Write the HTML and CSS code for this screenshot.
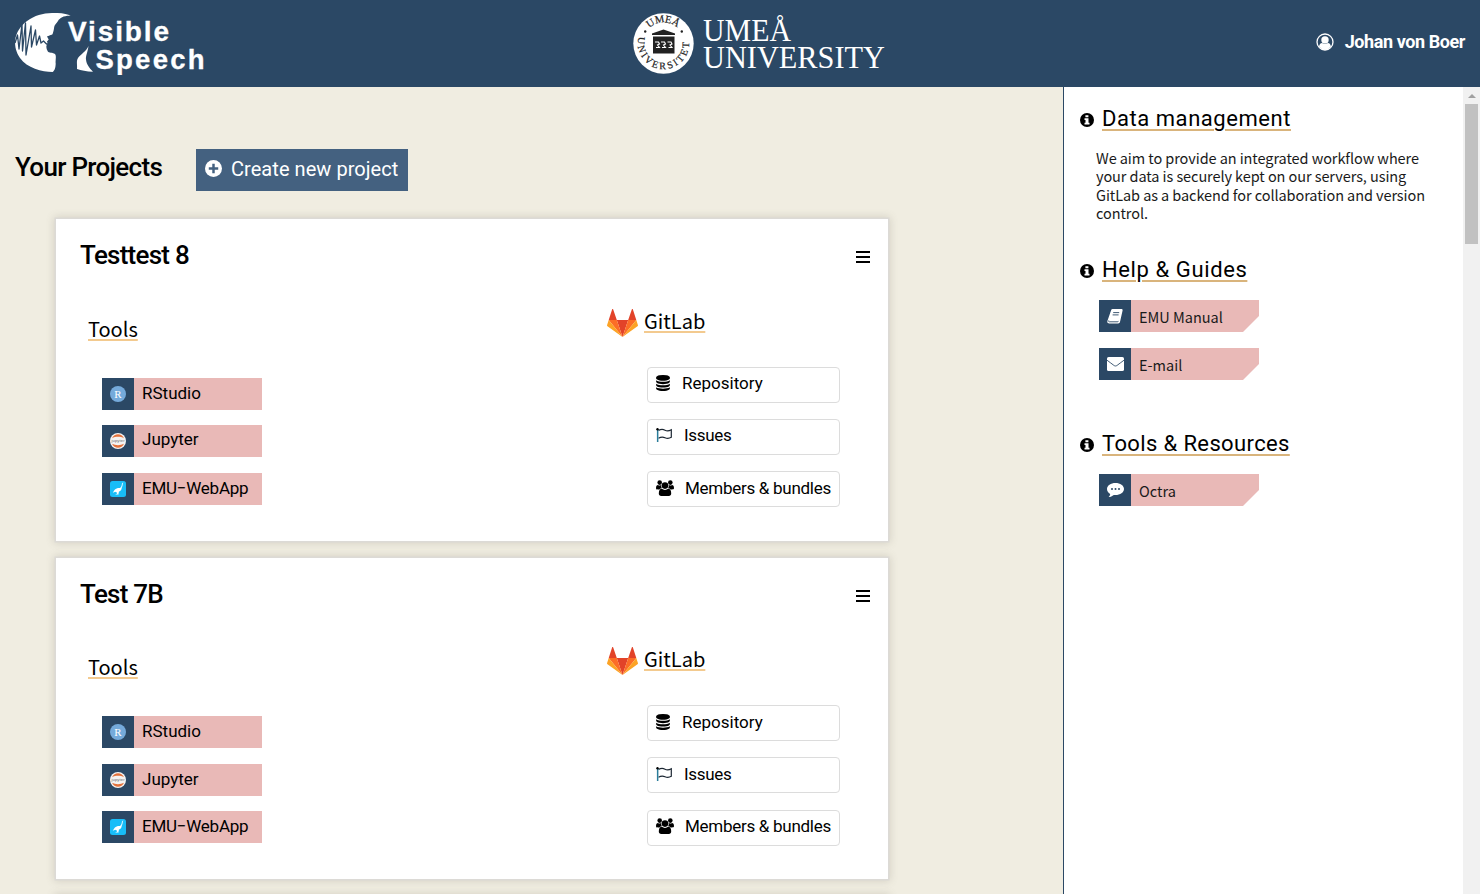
FILE: index.html
```html
<!DOCTYPE html>
<html lang="en">
<head>
<meta charset="utf-8">
<title>Visible Speech</title>
<link rel="stylesheet" href="styles.css">
</head>
<body>
<svg class="defs" width="0" height="0">
  <symbol id="i-info" viewBox="0 0 14 14"><circle cx="7" cy="7" r="7"/><path fill="#fff" d="M5.400 2.200h3v2.100h-3zM4.500 5.300h4v4.400h1v1.800h-5V9.700h1V7.100h-1z"/></symbol>
  <symbol id="i-menu" viewBox="0 0 14 12"><path d="M0 0h14v2H0zM0 5h14v2H0zM0 10h14v2H0z"/></symbol>
  <symbol id="i-db" viewBox="0 0 1536 1792"><path d="M768 768q237 0 443-43t325-127v170q0 69-103 128t-280 93.5-385 34.5-385-34.5-280-93.5-103-128v-170q119 84 325 127t443 43zm0 768q237 0 443-43t325-127v170q0 69-103 128t-280 93.5-385 34.5-385-34.5-280-93.5-103-128v-170q119 84 325 127t443 43zm0-384q237 0 443-43t325-127v170q0 69-103 128t-280 93.5-385 34.5-385-34.5-280-93.5-103-128v-170q119 84 325 127t443 43zm0-1152q208 0 385 34.5t280 93.5 103 128v128q0 69-103 128t-280 93.5-385 34.5-385-34.5-280-93.5-103-128v-128q0-69 103-128t280-93.5 385-34.5z"/></symbol>
  <symbol id="i-flag" viewBox="0 0 16 14"><path fill="none" stroke="#1c2733" stroke-width="1.200" d="M2.500 2.600C5 1 7 1.200 9 2.200s4 .8 6.300-.5v7.600c-2.200 1.300-4.300 1.300-6.300.4s-4-.9-6.500.5"/><path fill="#2a7d9b" d="M.9 1h1.500v13H.9z"/><circle cx="1.500" cy="1.300" r="1.200"/></symbol>
  <symbol id="i-users" viewBox="0 0 18 16"><circle cx="3.700" cy="2.600" r="2.300"/><circle cx="14.300" cy="2.600" r="2.300"/><path d="M0 8.200C0 6 .8 4.900 2 4.900c.8.700 2.300.8 3.200.2-.2 1.400.1 2.300.8 3.100-1 0-1.900.5-2.500 1.200H2C.7 9.400 0 9 0 8.200zM18 8.200c0-2.200-.8-3.300-2-3.300-.8.700-2.300.8-3.200.2.200 1.400-.1 2.300-.8 3.100 1 0 1.900.5 2.500 1.200H16c1.300 0 2-.4 2-1.200z"/><circle cx="9" cy="5.600" r="3.300"/><path d="M2.800 13.600c0-3.200 1-4.800 3-4.800 1.900 1.500 4.500 1.500 6.400 0 2 0 3 1.600 3 4.800 0 1.600-.9 2.400-2.400 2.400H5.200c-1.500 0-2.400-.8-2.400-2.400z"/></symbol>
  <symbol id="i-gitlab" viewBox="0 0 31 28"><path fill="#e24329" d="M15.500 28 21.200 11H9.800z"/><path fill="#fc6d26" d="M15.500 28 9.800 11H1.700zM15.500 28l5.700-17h8.100z"/><path fill="#fca326" d="M1.700 11 .1 16c-.2.500 0 1 .4 1.300l15 10.700zM29.300 11l1.600 5c.2.500 0 1-.4 1.300l-15 10.700z"/><path fill="#e24329" d="M1.700 11h8.100L6.200.4c-.2-.5-.9-.5-1.100 0zM29.300 11h-8.100L24.800.4c.2-.5.9-.5 1.100 0z"/></symbol>
  <symbol id="i-emu" viewBox="0 0 16 16"><rect width="16" height="16" rx="2.500" fill="#18bdf8"/><path fill="#fff" d="M13.600 1.800c-1-.3-1.600.2-1.700 1.100-.2 1.700-.7 3.300-1.900 4.100-2-.2-4 .4-5.300 1.700-.8.900-1.300 2-1.900 3.100l2.500-1 .9.400c.8.300 1.200.7.900 1.400l-2 1h3.700l-.4-.7c.4-.8.500-1.400.4-2.100 1.900-.8 2.900-2 2.900-4 .8-1.400 1-3 1.100-4.600z"/></symbol>
  <symbol id="i-book" viewBox="0 0 16 15"><path fill="#fff" d="M4.200.9C4.400.3 4.900 0 5.500 0h8.900c.9 0 1.400.6 1.200 1.400L13 13c-.2.900-.9 1.400-1.900 1.400H2c-1.400 0-2-1-1.600-2.300z"/><path fill="none" stroke="#2b4865" stroke-width=".9" d="M1.700 11.500c-.4.900.1 1.300.7 1.300h8c.6 0 .9-.3 1.100-.9M6.200 3.600h6M5.600 5.900h6"/></symbol>
  <symbol id="i-mail" viewBox="0 0 17 14"><rect width="17" height="14" rx="1.600" fill="#fff"/><path fill="none" stroke="#2b4865" stroke-width=".9" d="M0 3.200c2.500 2 5 3.600 6.800 5.100 1.200.9 2.200.9 3.400 0C12 6.800 14.500 5.200 17 3.200"/></symbol>
  <symbol id="i-chat" viewBox="0 0 17 14"><path fill="#fff" d="M8.500 0C13.200 0 17 2.600 17 6s-3.800 6-8.500 6l-1.700-.1C5.200 13.200 3.500 13.900 1.600 14c.9-.9 1.500-1.900 1.600-3.100C1.200 9.800 0 8 0 6c0-3.400 3.800-6 8.500-6z"/><g fill="#2b4865"><circle cx="5" cy="6" r="1"/><circle cx="8.500" cy="6" r="1"/><circle cx="12" cy="6" r="1"/></g></symbol>
</svg>

<header class="topbar">
  <svg class="brand" viewBox="15 13 189 62" width="189" height="62">
    <path fill="#fff" d="M52 13c9-.3 15 .8 19 2.900-7-.4-11 2-13 5.100-1.500 2.300-3.800 4-3.900 6.500-.2 2.500-.9 4.500-1.500 6.500-.6 1.200-4.600 1.600-5.600 2.500l1.700 3-1.700 2 .7 2-1.200 2c-.5 2.500.5 4.500 1.500 6.300 2 1.200 6.300.8 7.500 2.900.9 3-.3 6 .2 9-.3 4-.5 6-3 8.300C42 72 27 68 20 58c-4-6-5-11-5-17C17 24 34 13 52 13z"/>
    <path fill="none" stroke="#2b4865" stroke-width="1.300" stroke-linejoin="round" d="M15 43l2.500-8 1.500 14 3-25 .5 27 3-28 .5 32 5-29 .5 21 4-17 1 15 3-9 1.500 7 2.500-2 3 3h3"/>
    <path fill="#fff" d="M88.500 46c-1 7-3 10-2.500 13.500.4 5 3.500 8.500 7 12.200C86.500 71.500 81 70.500 77 69c.5-4-1-8 1-11 3-4 8-6.500 10.500-12z"/>
    <g fill="#fff" stroke="#fff" stroke-width=".3" font-family="Liberation Sans, Arial, sans-serif" font-weight="bold">
      <text x="68" y="40.500" font-size="28" textLength="101">Visible</text>
      <text x="95.500" y="69" font-size="27.500" textLength="109">Speech</text>
    </g>
  </svg>
  <svg class="university" viewBox="633 12 254 63" width="254" height="63">
    <defs>
      <path id="ring-top" d="M642.500 43.500a21 21 0 0 1 42 0"/>
      <path id="ring-bottom" d="M639.200 35a25.700 25.700 0 1 0 48.600 0"/>
    </defs>
    <circle cx="663.500" cy="43.500" r="30.200" fill="#fff"/>
    <g font-family="Liberation Serif, serif" font-size="10.500" fill="#222" stroke="#222" stroke-width=".2">
      <text><textPath href="#ring-top" startOffset="17">UMEÅ</textPath></text>
      <text font-size="10" letter-spacing="2.300"><textPath href="#ring-bottom" startOffset="2">UNIVERSITET</textPath></text>
    </g>
    <g fill="#222"><circle cx="645.200" cy="31.500" r="1.200"/><circle cx="681.800" cy="31.500" r="1.200"/>
      <path d="M652 35v-1.500l11.500-4 11.500 4V35zM653 36.500h21.500v17H653z"/></g>
    <g fill="none" stroke="#fff" stroke-width="1.100"><path d="M655 42h3.500l1 2-2 1 2 2.500H656M661 42h3.500l1 2-2 1 2 2.500H662M667.500 42h3.500l1 2-2 1 2 2.500h-3.500"/></g>
    <g font-family="Liberation Serif, serif" font-size="31" fill="#fff">
      <text x="703" y="41.300" textLength="88" lengthAdjust="spacingAndGlyphs">UMEÅ</text>
      <text x="703" y="68.300" textLength="182" lengthAdjust="spacingAndGlyphs">UNIVERSITY</text>
    </g>
  </svg>
  <div class="user">
    <svg viewBox="0 0 18 18" width="18" height="18"><circle cx="9" cy="9" r="8" fill="none" stroke="#fff" stroke-width="1.300"/><circle cx="9" cy="6.900" r="3.700" fill="#fff"/><path fill="#fff" d="M3 13.600c.3-2.400 1.400-3.500 3.100-3.700 1.800 1.200 4 1.200 5.800 0 1.700.2 2.800 1.300 3.100 3.700A8 8 0 0 1 9 17a8 8 0 0 1-6-3.400z"/></svg>
    <span class="user-name">Johan von Boer</span>
  </div>
</header>

<div class="layout">
  <main class="projects">
    <div class="projects-head">
      <h1 class="page-title">Your Projects</h1>
      <button class="create"><svg viewBox="0 0 18 18" width="17" height="17"><circle cx="9" cy="9" r="9" fill="#fff"/><path fill="#446180" d="M7.700 4h2.600v3.700H14v2.600h-3.700V14H7.700v-3.700H4V7.700h3.700z"/></svg><span>Create new project</span></button>
    </div>

    <section class="card">
      <div class="card-head"><h2 class="card-title">Testtest 8</h2><svg class="menu" width="14" height="12"><use href="#i-menu"/></svg></div>
      <div class="card-body">
        <div class="tools">
          <h3 class="sub"><span>Tools</span></h3>
          <a class="tool"><b class="tool-icon"><span class="r-logo">R</span></b><span>RStudio</span></a>
          <a class="tool jupyter"><b class="tool-icon"><svg width="16" height="16" viewBox="0 0 16 16"><circle cx="8" cy="8" r="8" fill="#f5f3f2"/><path fill="#e2703a" d="M2 5.200C3.200 2.500 5.500 1.200 8 1.200s4.800 1.300 6 4C10.500 3.300 5.500 3.300 2 5.200zM2 10.800c1.200 2.700 3.500 4 6 4s4.800-1.300 6-4c-3.500 1.900-8.500 1.900-12 0z"/><text class="jup" x="1.500" y="9.200" textLength="13">jupyter</text></svg></b><span>Jupyter</span></a>
          <a class="tool"><b class="tool-icon"><svg width="16" height="16"><use href="#i-emu"/></svg></b><span class="w-em">EMU−WebApp</span></a>
        </div>
        <div class="gitlab">
          <h3 class="sub git"><svg width="31" height="28"><use href="#i-gitlab"/></svg><span>GitLab</span></h3>
          <a class="link"><svg width="14" height="16"><use href="#i-db"/></svg><span>Repository</span></a>
          <a class="link"><svg width="16" height="14"><use href="#i-flag"/></svg><span class="w-is">Issues</span></a>
          <a class="link members"><svg width="18" height="16"><use href="#i-users"/></svg><span>Members &amp; bundles</span></a>
        </div>
      </div>
    </section>

    <section class="card">
      <div class="card-head"><h2 class="card-title">Test 7B</h2><svg class="menu" width="14" height="12"><use href="#i-menu"/></svg></div>
      <div class="card-body">
        <div class="tools">
          <h3 class="sub"><span>Tools</span></h3>
          <a class="tool"><b class="tool-icon"><span class="r-logo">R</span></b><span>RStudio</span></a>
          <a class="tool"><b class="tool-icon"><svg width="16" height="16" viewBox="0 0 16 16"><circle cx="8" cy="8" r="8" fill="#f5f3f2"/><path fill="#e2703a" d="M2 5.200C3.200 2.500 5.500 1.200 8 1.200s4.800 1.300 6 4C10.500 3.300 5.500 3.300 2 5.200zM2 10.800c1.200 2.700 3.500 4 6 4s4.800-1.300 6-4c-3.500 1.900-8.500 1.900-12 0z"/><text class="jup" x="1.500" y="9.200" textLength="13">jupyter</text></svg></b><span>Jupyter</span></a>
          <a class="tool"><b class="tool-icon"><svg width="16" height="16"><use href="#i-emu"/></svg></b><span class="w-em">EMU−WebApp</span></a>
        </div>
        <div class="gitlab">
          <h3 class="sub git"><svg width="31" height="28"><use href="#i-gitlab"/></svg><span>GitLab</span></h3>
          <a class="link"><svg width="14" height="16"><use href="#i-db"/></svg><span>Repository</span></a>
          <a class="link"><svg width="16" height="14"><use href="#i-flag"/></svg><span class="w-is">Issues</span></a>
          <a class="link members"><svg width="18" height="16"><use href="#i-users"/></svg><span>Members &amp; bundles</span></a>
        </div>
      </div>
    </section>

    <section class="card"></section>
  </main>

  <aside class="side">
    <h2 class="side-title"><svg width="14" height="14"><use href="#i-info"/></svg><span class="w-dm">Data management</span></h2>
    <p class="about">We aim to provide an integrated workflow where<br>your data is securely kept on our servers, using<br>GitLab as a backend for collaboration and version<br>control.</p>
    <h2 class="side-title"><svg width="14" height="14"><use href="#i-info"/></svg><span class="w-hg">Help &amp; Guides</span></h2>
    <a class="res"><b class="tool-icon"><svg width="16" height="15"><use href="#i-book"/></svg></b><span>EMU Manual</span></a>
    <a class="res"><b class="tool-icon"><svg width="17" height="14"><use href="#i-mail"/></svg></b><span>E-mail</span></a>
    <h2 class="side-title last"><svg width="14" height="14"><use href="#i-info"/></svg><span class="w-tr">Tools &amp; Resources</span></h2>
    <a class="res"><b class="tool-icon"><svg width="17" height="14"><use href="#i-chat"/></svg></b><span>Octra</span></a>
  </aside>
  <div class="scrollbar"><i class="arrow"></i><i class="thumb"></i></div>
</div>
</body>
</html>
```
FILE: styles.css
```css
* { box-sizing: border-box; }
body { margin: 0; height: 894px; overflow: hidden; display: flex; flex-direction: column; font-family: Roboto, sans-serif; color: #000; background: #f0ede1; }
h1, h2, h3, p { margin: 0; font-weight: 400; }
svg { display: block; flex: none; }
.defs { position: absolute; }

.topbar { flex: none; height: 87px; background: #2b4865; display: grid; grid-template-columns: 618px 254px 1fr; padding: 0 15px; align-items: start; }
.brand { margin-top: 13px; }
.university { margin-top: 12px; }
.user { display: flex; justify-content: flex-end; align-items: center; gap: 11px; padding-top: 30px; height: 54px; color: #fff; }
.user-name { font-size: 18px; font-weight: 700; letter-spacing: -.42px; line-height: 24px; white-space: nowrap; }

.layout { flex: 1; min-height: 0; display: grid; grid-template-columns: 1063px 400px 17px; }
.projects { padding-top: 62px; overflow: hidden; }
.projects-head { display: flex; height: 42px; padding-left: 15px; margin-bottom: 28px; }
.page-title { width: 181px; font-size: 26px; font-weight: 500; letter-spacing: -.7px; line-height: 36px; white-space: nowrap; }
.create { width: 212px; height: 42px; border: 0; padding: 0 0 3px 9px; background: #446180; color: #fff; font: 400 20px/24px Roboto, sans-serif; letter-spacing: .05px; display: flex; align-items: center; gap: 9px; white-space: nowrap; }

.card { width: 832px; height: 321.500px; margin: 0 0 17px 56px; background: #fff; box-shadow: 0 0 0 1.500px #dcdad6, 0 0 8px 2px rgba(100, 95, 80, .2); padding: 18px 18px 0 24px; }
.card-head { display: flex; justify-content: space-between; height: 71.800px; }
.card-title { font-size: 26px; font-weight: 500; letter-spacing: -.75px; line-height: 36px; }
.menu { margin-top: 14px; }
.card-body { display: flex; justify-content: space-between; padding: 0 30px 0 8px; }
.sub { font: 400 20px/30px "Noto Sans CJK SC", sans-serif; }
.sub span { text-decoration: underline #f3ca8f 2px; text-underline-offset: 2px; }
.tools { padding-top: 5px; }
.tools .sub { height: 64px; }
.tool { display: flex; width: 160px; height: 32px; margin: 0 0 15.500px 14px; background: #e9b9b7; font-size: 17px; line-height: 30px; }
.jupyter { line-height: 29px; }
.tool-icon { flex: none; width: 32px; height: 32px; margin-right: 8px; background: #2b4865; display: flex; align-items: center; justify-content: center; }
.r-logo { width: 16px; height: 16px; border-radius: 50%; background: #75aadb; color: #fff; font: 400 11px/16px "Liberation Serif", serif; text-align: center; }
.jup { font: 400 4px "Liberation Sans", sans-serif; fill: #666; }
.w-em { letter-spacing: -.25px; }
.gitlab { width: 233px; }
.git { display: flex; gap: 6px; height: 58px; line-height: 24px; }
.link { display: flex; align-items: center; width: 193px; height: 36px; margin: 0 0 16.200px 40px; padding: 0 0 3px 8px; border: 1px solid #dcdcdc; border-radius: 4px; font-size: 17px; gap: 12px; white-space: nowrap; }
.w-is { letter-spacing: -.3px; }
.members { gap: 11px; letter-spacing: -.28px; }

.side { background: #fff; border-left: 1px solid #2b4865; padding: 17px 0 0 16px; }
.side-title { display: flex; align-items: center; gap: 8px; height: 29px; font-size: 22px; line-height: 29px; white-space: nowrap; }
.side-title svg { margin-top: 2px; }
.side-title span { text-decoration: underline #d9b47c 2px; text-underline-offset: 3px; }
.w-dm { letter-spacing: .55px; }
.w-hg { letter-spacing: .6px; }
.w-tr { letter-spacing: .37px; }
.about { margin: 16px 0 32px 16px; height: 74px; font: 400 14.500px/18.300px "Noto Sans CJK SC", sans-serif; letter-spacing: -.08px; color: #1a1a1a; white-space: nowrap; }
.res { display: flex; width: 160px; height: 32px; margin: 0 0 16px 19px; background: #e9b9b7; clip-path: polygon(0 0, 100% 0, 100% 50%, 90% 100%, 0 100%); font: 400 14.500px/34px "Noto Sans CJK SC", sans-serif; color: #1a1a1a; }
.side-title + .res { margin-top: 16px; }
.last { margin-top: 49px; }
.scrollbar { background: #f1f1f1; display: flex; flex-direction: column; align-items: center; padding-top: 7px; }
.arrow { border: 4px solid transparent; border-top: 0; border-bottom-color: #a0a0a0; }
.thumb { width: 13px; height: 140px; margin-top: 6px; background: #c1c1c1; }
```
